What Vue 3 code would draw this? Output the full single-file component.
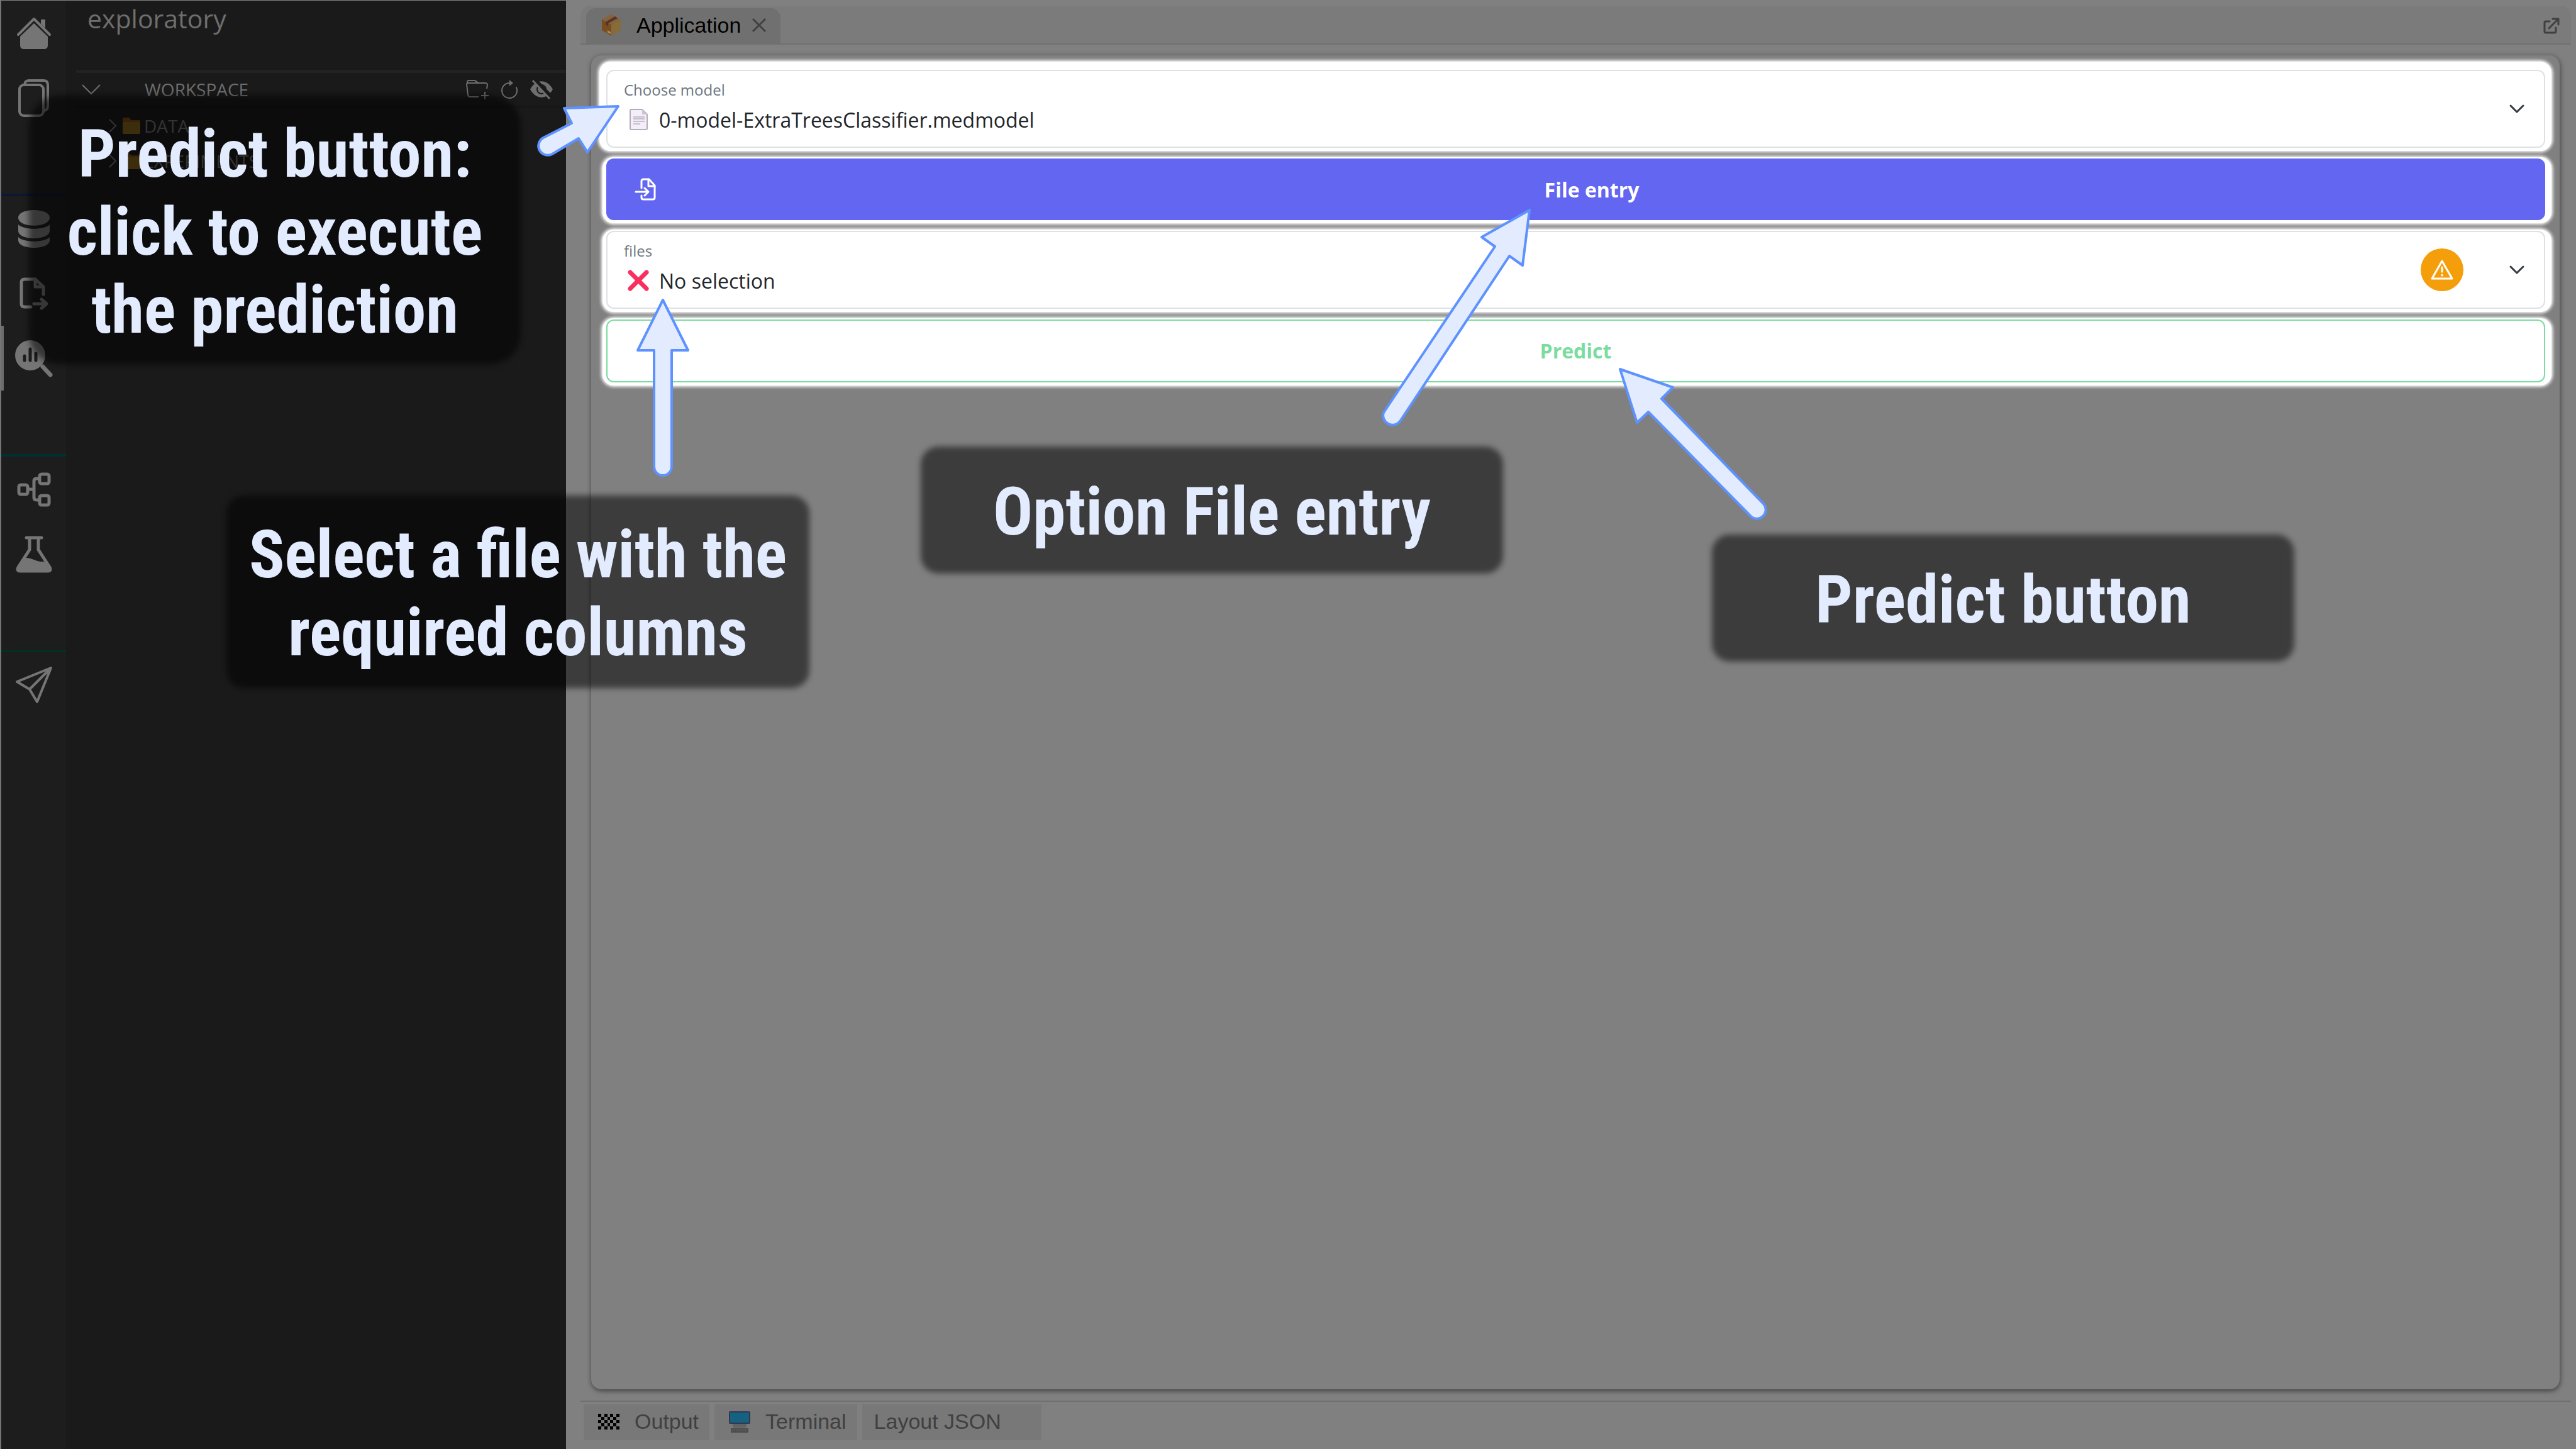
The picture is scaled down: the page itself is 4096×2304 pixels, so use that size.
<script setup>
import { ref } from 'vue'

const model = ref('0-model-ExtraTreesClassifier.medmodel')
const file = ref('No selection')

const folders = ['DATA', 'EXPERIMENTS']

const callouts = [
  { id: 'model', lines: ['Predict button:', 'click to execute', 'the prediction'] },
  { id: 'files', lines: ['Select a file with the', 'required columns'] },
  { id: 'option', lines: ['Option File entry'] },
  { id: 'action', lines: ['Predict button'] },
]

const arrows = [
  'M983 169 L897 172 L909 196 L864 219 A14 14 0 0 0 878 245 L920 220 L934 242 Z',
  'M1054 477 L1094 557 L1068 557 L1068 742 A14 14 0 0 1 1040 742 L1040 557 L1014 557 Z',
  'M2432 334 L2356 377 L2377 392 L2200 656 A15 15 0 0 0 2226 670 L2400 407 L2421 422 Z',
  'M2576 587 L2660 616 L2642 634 L2804 801 A14 14 0 0 1 2783 820 L2621 655 L2603 672 Z',
]

const checks = []
for (let r = 0; r < 5; r++) {
  for (let c = r % 2; c < 7; c += 2) checks.push({ x: c, y: r })
}
</script>

<template>
  <div class="app">
    <nav class="rail" aria-label="Main">
      <button class="rail-item" aria-label="Home">
        <svg width="54" height="50" viewBox="0 0 54 50">
          <path d="M2 27 L27 2 L52 27" fill="none" stroke="currentColor" stroke-width="4" stroke-linecap="round" stroke-linejoin="round" />
          <path d="M38 3 h7 v14 l-7 -7 Z" fill="currentColor" />
          <path d="M27 9 L49 30 V44 Q49 50 43 50 H11 Q5 50 5 44 V30 Z" fill="currentColor" />
        </svg>
      </button>
      <button class="rail-item" aria-label="Workspace files">
        <svg width="50" height="60" viewBox="0 0 50 60" fill="none" stroke="currentColor" stroke-width="4">
          <rect x="2" y="9" width="38" height="49" rx="7" />
          <path d="M10 8 Q11 2 17 2 H40 Q47 2 47 9 V42 Q47 49 41 50" />
        </svg>
      </button>
      <hr class="rail-line blue">
      <button class="rail-item" aria-label="Input">
        <svg width="50" height="60" viewBox="0 0 50 60" fill="currentColor">
          <path d="M0 12 C0 -4 50 -4 50 12 C50 29 0 29 0 12 Z" />
          <path d="M0 23 C8 32 42 32 50 23 V33 C50 49 0 49 0 33 Z" />
          <path d="M0 43 C8 52 42 52 50 43 V48 C50 64 0 64 0 48 Z" />
        </svg>
      </button>
      <button class="rail-item" aria-label="Export">
        <svg width="46" height="52" viewBox="0 0 46 52" fill="none" stroke="currentColor" stroke-width="5" stroke-linecap="round" stroke-linejoin="round">
          <path d="M18 47 H8 Q3 47 3 42 V8 Q3 3 8 3 H25 L38 15 V27" />
          <path d="M25 3 V15 H38" />
          <path d="M23 42 H42 M35 35 L43 42 L35 49" />
        </svg>
      </button>
      <button class="rail-item active" aria-label="Exploratory">
        <svg width="60" height="58" viewBox="0 0 60 58">
          <path d="M44 42 L56 55" stroke="currentColor" stroke-width="7" stroke-linecap="round" />
          <circle cx="24" cy="24" r="24" fill="currentColor" />
          <path d="M15 25 V32 M24 14 V32 M33 21 V32" stroke="#1d1d1d" stroke-width="5" stroke-linecap="round" />
        </svg>
      </button>
      <hr class="rail-line teal">
      <button class="rail-item" aria-label="Learning">
        <svg width="54" height="54" viewBox="0 0 54 54" fill="none" stroke="currentColor" stroke-width="5">
          <rect x="3" y="20" width="14" height="15" rx="3" />
          <rect x="36" y="3" width="15" height="15" rx="3" />
          <rect x="36" y="37" width="15" height="15" rx="3" />
          <path d="M17 27 H27 M36 10 H31 Q27 10 27 14 V40 Q27 44 31 44 H36" />
        </svg>
      </button>
      <button class="rail-item" aria-label="Evaluation">
        <svg width="58" height="58" viewBox="0 0 58 58">
          <path d="M17 3 H41" stroke="currentColor" stroke-width="5" stroke-linecap="round" />
          <path d="M22 4 V22 L4 50 Q1 56 7 56 H51 Q57 56 54 50 L36 22 V4" fill="none" stroke="currentColor" stroke-width="5" />
          <path d="M14 35 C26 34 32 42 45 41 L55 52 Q55 56 50 56 H7 Q2 56 4 50 Z" fill="currentColor" />
        </svg>
      </button>
      <hr class="rail-line green">
      <button class="rail-item" aria-label="Application">
        <svg width="58" height="58" viewBox="0 0 58 58" fill="none" stroke="currentColor" stroke-width="4" stroke-linejoin="round">
          <path d="M56 2 L2 24 L22 36 L34 56 Z M56 2 L22 36" />
        </svg>
      </button>
    </nav>

    <aside class="side">
      <h1 class="side-title">exploratory</h1>
      <div class="side-head">
        <button class="bare" aria-label="Collapse workspace">
          <svg width="30" height="16" viewBox="0 0 30 16" fill="none" stroke="currentColor" stroke-width="2"><path d="M1 1 L15 15 L29 1" /></svg>
        </button>
        <h2>WORKSPACE</h2>
        <div class="side-tools">
          <button class="bare" aria-label="New folder">
            <svg width="36" height="32" viewBox="0 0 36 32" fill="none" stroke="currentColor" stroke-width="2">
              <path d="M20 28 H7 Q3 28 3 24 L1 8 Q1 6 4 6 H30 Q34 6 34 9 L33 15" />
              <path d="M2 7 V4 Q2 2 5 2 H13 Q15 2 17 4 L20 6" />
              <path d="M30 20 V32 M24 26 H36" />
            </svg>
          </button>
          <button class="bare" aria-label="Refresh">
            <svg width="28" height="30" viewBox="0 0 28 30">
              <path d="M14 5 A12 12 0 1 0 25 12" fill="none" stroke="currentColor" stroke-width="2" stroke-linecap="round" />
              <path d="M14 0 L20 5 L14 10 Z" fill="currentColor" />
            </svg>
          </button>
          <button class="bare" aria-label="Hide hidden files">
            <svg width="36" height="30" viewBox="0 0 36 30">
              <path d="M0 15 C9 -2 27 -2 36 15 C27 32 9 32 0 15 Z" fill="currentColor" />
              <circle cx="18" cy="15" r="7" fill="currentColor" stroke="#1a1a1a" stroke-width="2" />
              <path d="M6 -1 L34 28" stroke="#1a1a1a" stroke-width="7" />
              <path d="M4 1 L31 30" stroke="currentColor" stroke-width="3" />
            </svg>
          </button>
        </div>
      </div>
      <ul class="tree">
        <li v-for="name in folders" :key="name">
          <svg width="12" height="22" viewBox="0 0 12 22" fill="none" stroke="currentColor" stroke-width="2"><path d="M1 1 L11 11 L1 21" /></svg>
          <svg class="folder" width="28" height="26" viewBox="0 0 28 26">
            <path d="M0 2 Q0 0 2 0 H10 L14 4 H26 Q28 4 28 6 V12 H0 Z" fill="#7a4710" />
            <path d="M0 7 H28 V24 Q28 26 26 26 H2 Q0 26 0 24 Z" fill="#80621c" />
          </svg>
          <span>{{ name }}</span>
        </li>
      </ul>
    </aside>

    <main class="main">
      <header class="tabbar">
        <div class="tab">
          <svg width="30" height="34" viewBox="0 0 30 34">
            <path d="M15 0 L30 8 L15 16 L0 8 Z" fill="#866339" />
            <path d="M0 8 L15 16 V34 L0 25 Z" fill="#7a4d1f" />
            <path d="M30 8 L15 16 V34 L30 25 Z" fill="#876b3a" />
            <path d="M21 3 L25 6 L10 14 V19 L6 16 V12 Z" fill="#56332a" />
            <path d="M9 25 L14 28 V31 L9 29 Z" fill="#a08c78" />
          </svg>
          <button class="tab-name">Application</button>
          <button class="bare" aria-label="Close tab">
            <svg width="22" height="22" viewBox="0 0 22 22" stroke="currentColor" stroke-width="3"><path d="M1 1 L21 21 M21 1 L1 21" /></svg>
          </button>
        </div>
        <button class="bare popout" aria-label="Open in new window">
          <svg width="26" height="26" viewBox="0 0 26 26" fill="none" stroke="currentColor" stroke-width="3" stroke-linecap="round" stroke-linejoin="round">
            <path d="M10 6 H4 Q2 6 2 8 V22 Q2 24 4 24 H18 Q20 24 20 22 V16 M9 17 L24 2 M15 2 H24 V11" />
          </svg>
        </button>
      </header>

      <section class="panel">
        <div class="spot first">
          <div class="field">
            <div class="field-body">
              <label for="model">Choose model</label>
              <div class="field-value">
                <svg width="48" height="34" viewBox="0 0 48 34">
                  <path d="M12 1 H29 L37 9 V31 Q37 33 35 33 H12 Q10 33 10 31 V3 Q10 1 12 1 Z" fill="#f3eef8" stroke="#b4acbc" stroke-width="2" />
                  <path d="M29 1 V9 H37 Z" fill="#cdc4d6" />
                  <path d="M15 13 H33 M15 16 H33 M15 20 H33 M15 24 H26" stroke="#998fa5" stroke-width="1" />
                </svg>
                <select id="model" v-model="model">
                  <option>0-model-ExtraTreesClassifier.medmodel</option>
                </select>
              </div>
            </div>
            <svg class="caret" width="24" height="14" viewBox="0 0 24 14"><path d="M2 2 L12 12 L22 2" /></svg>
          </div>
        </div>

        <div class="spot">
          <button class="entry">
            <svg width="34" height="36" viewBox="0 0 34 36" fill="none" stroke="currentColor" stroke-width="3" stroke-linecap="round" stroke-linejoin="round">
              <path d="M11 16 V5 Q11 2 14 2 H23 L32 12 V31 Q32 34 29 34 H14 Q11 34 11 31 V28" />
              <path d="M22 2 V13 H32 M2 22 H21 M16 16 L22 22 L16 28" />
            </svg>
            <span>File entry</span>
          </button>
        </div>

        <div class="spot">
          <div class="field">
            <div class="field-body">
              <label for="files">files</label>
              <div class="field-value">
                <svg width="48" height="34" viewBox="0 0 48 34"><path d="M10 4 L36 30 M36 4 L10 30" stroke="#f92f60" stroke-width="7" stroke-linecap="round" /></svg>
                <select id="files" v-model="file">
                  <option>No selection</option>
                </select>
              </div>
            </div>
            <button class="warn" aria-label="Warning">
              <svg width="36" height="32" viewBox="0 0 36 32" fill="none" stroke="#fff" stroke-width="3" stroke-linecap="round" stroke-linejoin="round">
                <path d="M18 2 L34 30 H2 Z" />
                <path d="M18 12 V19 M18 24 V25" />
              </svg>
            </button>
            <svg class="caret" width="24" height="14" viewBox="0 0 24 14"><path d="M2 2 L12 12 L22 2" /></svg>
          </div>
        </div>

        <div class="spot">
          <button class="predict">Predict</button>
        </div>
      </section>

      <footer class="bottom">
        <button class="btab">
          <svg width="34" height="25" viewBox="0 0 7 5" preserveAspectRatio="none" shape-rendering="crispEdges">
            <rect v-for="(q, i) in checks" :key="i" :x="q.x" :y="q.y" width="1" height="1" fill="#000" />
          </svg>
          <span>Output</span>
        </button>
        <button class="btab">
          <svg width="34" height="34" viewBox="0 0 34 34">
            <rect x="1" y="1" width="32" height="18" rx="1" fill="#136380" stroke="#363654" stroke-width="2" />
            <path d="M6 20 H28 V24 L26 26 H8 L6 24 Z" fill="#626262" />
            <rect x="3" y="27" width="28" height="7" rx="1" fill="#4c4c4c" />
            <path d="M5 29 H29 M5 31 H29" stroke="#666" stroke-width="1" stroke-dasharray="2 1" />
          </svg>
          <span>Terminal</span>
        </button>
        <button class="btab wide"><span>Layout JSON</span></button>
      </footer>
    </main>

    <div v-for="c in callouts" :key="c.id" class="callout" :class="c.id">
      <div class="callout-back"></div>
      <p><span v-for="line in c.lines" :key="line">{{ line }}</span></p>
    </div>
    <svg class="arrows" viewBox="0 0 4096 2304" preserveAspectRatio="xMinYMin meet" aria-hidden="true">
      <path v-for="d in arrows" :key="d" :d="d" />
    </svg>
  </div>
</template>

<style>
body {
  margin: 0;
  background: #808080;
}
</style>

<style scoped>
.app {
  position: relative;
  display: grid;
  grid-template-columns: 105px 795px 1fr;
  min-height: 100vh;
  overflow: hidden;
  background: #808080;
  font-family: "Open Sans", "Noto Sans", sans-serif;
}
* {
  box-sizing: border-box;
}
svg {
  display: block;
  flex: none;
  overflow: visible;
}
button {
  margin: 0;
  padding: 0;
  border: 0;
  background: none;
  color: inherit;
  font: inherit;
}
h1, h2, p, ul {
  margin: 0;
  padding: 0;
  font-weight: 400;
}

/* icon rail */
.rail {
  display: flex;
  flex-direction: column;
  margin-top: 1px;
  border-left: 2px solid #757575;
  background: #1d1d1d;
  color: #757575;
}
.rail-item {
  display: flex;
  align-items: center;
  justify-content: center;
  height: 103px;
}
.rail-item.active {
  box-shadow: inset 4px 0 #6c6c6c;
}
.rail-line {
  width: 100%;
  height: 4px;
  margin: 101px 0 0;
  border: 0;
}
.blue { background: #0a1836; }
.teal { background: #022f2f; }
.green { background: #033021; }

/* workspace sidebar */
.side {
  margin-top: 1px;
  background: #1a1a1a;
  color: #6e6e6e;
}
.side-title {
  height: 110px;
  padding-left: 34px;
  font-size: 41px;
  font-weight: 500;
  line-height: 56px;
}
.side-head {
  display: flex;
  align-items: center;
  height: 61px;
  margin-left: 16px;
  padding: 0 21px 0 9px;
  border-top: 5px solid #222;
  border-bottom: 4px solid #171717;
}
.side-head h2 {
  margin-left: 70px;
  font-size: 28px;
  font-weight: 500;
  line-height: 40px;
}
.side-tools {
  display: flex;
  align-items: center;
  gap: 19px;
  margin-left: auto;
}
.tree {
  list-style: none;
}
.tree li {
  display: flex;
  align-items: center;
  height: 56px;
  padding-left: 68px;
  font-size: 28px;
}
.folder {
  margin: 0 6px 0 10px;
}

/* main column */
.main {
  display: flex;
  flex-direction: column;
  padding: 9px 8px 14px 23px;
}
.tabbar {
  display: flex;
  align-items: center;
  height: 62px;
  padding: 4px 18px 0 9px;
  border-bottom: 2px solid #707070;
  border-radius: 16px 16px 0 0;
  background: #7b7b7b;
  font-family: "Liberation Sans", sans-serif;
  color: #404040;
}
.tab {
  display: flex;
  align-items: center;
  height: 56px;
  padding: 0 23px 2px 25px;
  border-radius: 15px 15px 0 0;
  background: #707070;
}
.tab-name {
  margin: 0 18px 0 25px;
  font-size: 34px;
  color: #000;
}
.popout {
  margin-left: auto;
}
.panel {
  flex: 1;
  display: flex;
  flex-direction: column;
  gap: 10px;
  margin: 17px 18px 18px 17px;
  padding: 10px 13px;
  border-radius: 16px;
  background: #808080;
  box-shadow: 0 3px 6px rgba(0, 0, 0, 0.2), 1px 2px 10px rgba(0, 0, 0, 0.35);
}
.spot {
  margin-left: 5px;
  padding: 2px 10px 5px 6px;
  border-radius: 18px;
  background: #fff;
  box-shadow: 0 0 5px 2px #fff;
}
.spot.first {
  margin-left: 0;
  padding: 13px 10px 5px 11px;
}
.field {
  display: flex;
  align-items: center;
  height: 124px;
  padding: 0 31px 0 26px;
  border: 2px solid #dee2e6;
  border-radius: 12px;
}
.field-body {
  flex: 1;
  display: flex;
  flex-direction: column;
}
.field label {
  font-size: 24px;
  line-height: 34px;
  color: #6c757d;
}
.field-value {
  display: flex;
  align-items: center;
  height: 60px;
}
.field select {
  flex: 1;
  margin: 0 0 0 8px;
  padding: 0;
  border: 0;
  background: none;
  appearance: none;
  font: inherit;
  font-size: 32px;
  color: #212529;
  opacity: 1;
}
.caret {
  fill: none;
  stroke: #343a40;
  stroke-width: 3;
  stroke-linecap: round;
  stroke-linejoin: round;
}
.warn {
  display: flex;
  align-items: center;
  justify-content: center;
  width: 68px;
  height: 68px;
  margin-right: 73px;
  border-radius: 50%;
  background: #f59e0b;
}
.entry,
.predict {
  display: flex;
  align-items: center;
  justify-content: center;
  width: 100%;
  height: 98px;
  padding: 0 45px;
  border-radius: 12px;
  font-size: 32px;
  font-weight: 700;
}
.entry {
  background: #6366f1;
  color: #fff;
}
.entry span {
  flex: 1;
  margin-left: 17px;
}
.predict {
  height: 100px;
  padding-bottom: 2px;
  border: 2px solid #7bdc9f;
  color: #7bdc9f;
}

/* bottom tabs */
.bottom {
  display: flex;
  gap: 8px;
  padding: 4px 5px 0;
  border-top: 2px solid #707070;
  font-family: "Liberation Sans", sans-serif;
  font-size: 34px;
  color: #404040;
}
.btab {
  display: flex;
  align-items: center;
  gap: 24px;
  height: 57px;
  padding: 0 17px 2px 23px;
  background: #787878;
}
.btab.wide {
  padding: 0 64px 2px 19px;
}

/* annotations */
.callout {
  position: absolute;
  display: flex;
  align-items: center;
  justify-content: center;
  padding-top: 8px;
}
.callout-back {
  position: absolute;
  inset: 0;
  border-radius: 28px;
  background: rgba(0, 0, 0, 0.53);
  filter: blur(5px);
}
.callout p {
  position: relative;
  font-family: "Roboto Condensed", "Liberation Sans Narrow", sans-serif;
  font-size: 105px;
  font-weight: 700;
  line-height: 124px;
  text-align: center;
  white-space: nowrap;
  color: #e3ebff;
}
.callout span {
  display: block;
}
.callout.model { left: 46px; top: 152px; width: 782px; height: 427px; }
.callout.model .callout-back { border-radius: 48px; }
.callout.files { left: 360px; top: 788px; width: 927px; height: 306px; }
.callout.option { left: 1464px; top: 710px; width: 926px; height: 202px; }
.callout.action { left: 2722px; top: 850px; width: 926px; height: 202px; }
.arrows {
  position: absolute;
  left: 0;
  top: 0;
  width: 100%;
  fill: #e3ebff;
  stroke: #5d92ff;
  stroke-width: 4;
  stroke-linejoin: round;
  pointer-events: none;
}
</style>
